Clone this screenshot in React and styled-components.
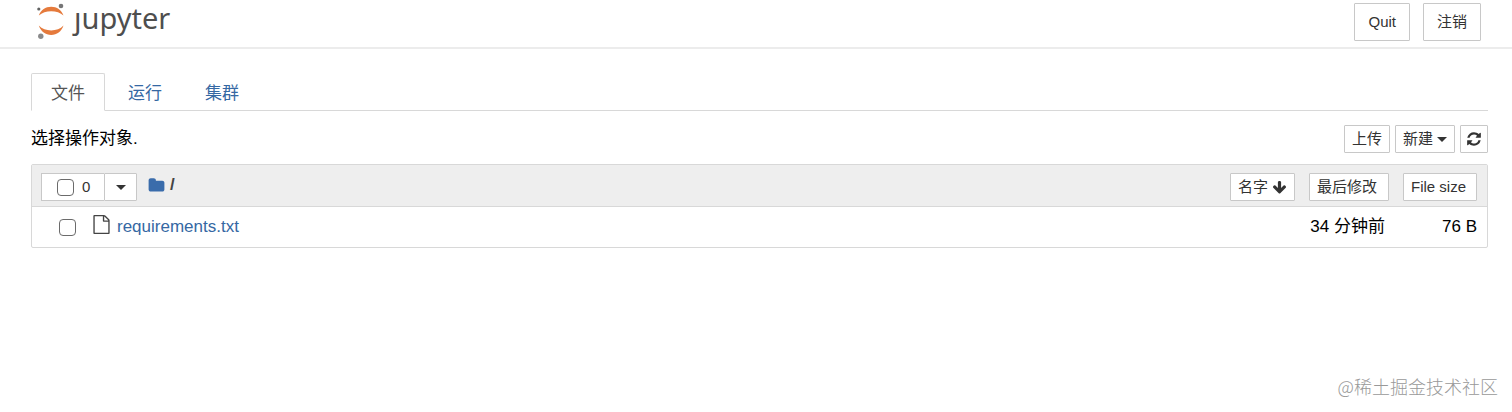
import React from "react";
import styled, { createGlobalStyle } from "styled-components";

const GlobalStyle = createGlobalStyle`
  *, *::before, *::after { box-sizing: border-box; }
  body {
    margin: 0;
    background: #fff;
    color: #000;
    font-family: "Liberation Sans", "Noto Sans CJK SC", sans-serif;
    font-size: 17px;
    line-height: 24px;
  }
`;

const Page = styled.div`
  display: flex;
  flex-direction: column;
  min-height: 100vh;
`;

const Header = styled.header`
  display: flex;
  justify-content: space-between;
  align-items: flex-start;
  padding: 3px 31px 6px 37px;
  border-bottom: 2px solid #ececec;
`;

const Logo = styled.a`
  display: flex;
  align-items: flex-start;
  gap: 9px;
  color: #4e4e4e;
  text-decoration: none;
`;

const LogoMark = styled.svg`
  display: block;
  width: 28px;
  height: 36px;
`;

const LogoText = styled.span`
  font-family: "Noto Sans", sans-serif;
  font-size: 29px;
  line-height: 30px;
`;

const HeaderActions = styled.div`
  display: flex;
  gap: 13px;
`;

const Button = styled.button`
  display: inline-flex;
  align-items: center;
  justify-content: ${(p) => p.$align || "center"};
  gap: 4px;
  height: ${(p) => (p.$large ? 38 : 28)}px;
  width: ${(p) => (p.$width ? `${p.$width}px` : "auto")};
  padding: 0 ${(p) => (p.$large ? 13 : 7)}px;
  border: 1px solid #c8c8c8;
  border-radius: 1px;
  background: #fff;
  color: #333;
  font-family: inherit;
  font-size: 15px;
  line-height: 20px;
  white-space: nowrap;
  cursor: pointer;
`;

const Main = styled.main`
  flex: 1;
  padding: 24px 24px 0 31px;
`;

const Tabs = styled.nav`
  display: flex;
  gap: 3px;
  border-bottom: 1px solid #d8d8d8;
`;

const Tab = styled.a`
  height: 38px;
  margin-bottom: -1px;
  padding: 8px 19px 0;
  border: 1px solid ${(p) => (p.$active ? "#d8d8d8" : "transparent")};
  border-bottom-color: ${(p) => (p.$active ? "#fff" : "transparent")};
  border-radius: 2px 2px 0 0;
  color: ${(p) => (p.$active ? "#555" : "#3568a3")};
  text-decoration: none;
`;

const Toolbar = styled.div`
  display: flex;
  justify-content: space-between;
  align-items: center;
  padding: 14px 0 11px;
`;

const Notice = styled.p`
  margin: 0;
`;

const ToolbarActions = styled.div`
  display: flex;
  gap: 5px;
`;

const FileList = styled.section`
  border: 1px solid #d8d8d8;
  border-radius: 2px;
`;

const ListHeader = styled.div`
  display: flex;
  justify-content: space-between;
  align-items: flex-start;
  padding: 8px 10px 5px 9px;
  border-bottom: 1px solid #d8d8d8;
  background: #eee;
`;

const Selection = styled.div`
  display: flex;
  align-items: flex-start;
`;

const SelectAll = styled.label`
  display: flex;
  align-items: center;
  gap: 8px;
  width: 63px;
  height: 28px;
  padding-left: 15px;
  border: 1px solid #c8c8c8;
  border-right: 0;
  background: #fff;
  color: #333;
  font-size: 15px;
`;

const Checkbox = styled.input`
  appearance: none;
  flex: none;
  width: 17px;
  height: 17px;
  margin: 0;
  border: 1px solid #6b6b6b;
  border-radius: 4px;
  background: #fff;
  &:checked { background: #3568a3; }
`;

const Breadcrumb = styled.nav`
  display: flex;
  align-items: center;
  gap: 5px;
  height: 24px;
  margin-left: 11px;
  color: #444;
  font-weight: 700;
`;

const CrumbLink = styled.a`
  display: flex;
  color: #3a6cab;
`;

const SortActions = styled.div`
  display: flex;
  gap: 14px;
`;

const FileRow = styled.div`
  display: flex;
  align-items: center;
  height: 40px;
  padding: 0 10px 0 27px;
`;

const FileLink = styled.a`
  display: flex;
  align-items: flex-start;
  gap: 6px;
  margin-left: 16px;
  color: #3568a3;
  text-decoration: none;
`;

const Modified = styled.span`
  margin-left: auto;
`;

const Size = styled.span`
  width: 92px;
  text-align: right;
`;

const Caret = styled.span`
  border-top: 5px solid #333;
  border-left: 5px solid transparent;
  border-right: 5px solid transparent;
`;

const Glyph = styled.svg`
  display: block;
  flex: none;
  width: ${(p) => p.$size}px;
  height: ${(p) => p.$size}px;
  fill: ${(p) => p.$color || "currentColor"};
`;

const Footer = styled.footer`
  padding: 0 14px 14px;
  color: #999;
  font-family: "Noto Sans CJK SC", sans-serif;
  font-size: 18px;
  text-align: right;
  font-weight: 300;
`;

const paths = {
  refresh:
    "M1639 1056q0 5-1 7-64 268-268 434.500t-478 166.500q-146 0-282.500-55t-243.500-157l-129 129q-19 19-45 19t-45-19-19-45v-448q0-26 19-45t45-19h448q26 0 45 19t19 45-19 45l-137 137q71 66 161 102t187 36q134 0 250-65t186-179q11-17 53-117 8-23 30-23h192q13 0 22.500 9.500t9.500 22.500zm25-800v448q0 26-19 45t-45 19h-448q-26 0-45-19t-19-45 19-45l138-138q-148-137-349-137-134 0-250 65t-186 179q-11 17-53 117-8 23-30 23h-199q-13 0-22.500-9.500t-9.500-22.500v-7q65-268 270-434.500t480-166.500q146 0 284 55.500t245 156.500l130-129q19-19 45-19t45 19 19 45z",
  file:
    "M1596 380q28 28 48 76t20 88v1152q0 40-28 68t-68 28h-1344q-40 0-68-28t-28-68v-1600q0-40 28-68t68-28h896q40 0 88 20t76 48zm-444-244v376h376q-10-29-22-41l-313-313q-12-12-41-22zm384 1528v-1024h-416q-40 0-68-28t-28-68v-416h-768v1536h1280z",
  folder:
    "M1728 608v704q0 92-66 158t-158 66h-1216q-92 0-158-66t-66-158v-960q0-92 66-158t158-66h320q92 0 158 66t66 158v32h672q92 0 158 66t66 158z",
  arrowDown:
    "M1675 832q0 53-37 90l-651 652q-39 37-91 37-53 0-90-37l-651-652q-38-36-38-90 0-53 38-91l74-75q39-37 91-37 53 0 90 37l294 294v-704q0-52 38-90t90-38h128q52 0 90 38t38 90v704l294-294q37-37 90-37 52 0 91 37l75 75q37 39 37 91z",
};

function Icon({ name, size, color }) {
  return (
    <Glyph viewBox="0 0 1792 1792" $size={size} $color={color} aria-hidden="true">
      <path d={paths[name]} />
    </Glyph>
  );
}

const tabs = ["文件", "运行", "集群"];
const files = [{ name: "requirements.txt", modified: "34 分钟前", size: "76 B" }];

export default function App() {
  return (
    <>
      <GlobalStyle />
      <Page>
        <Header>
          <Logo href="#" aria-label="jupyter">
            <LogoMark viewBox="0 0 28 36" aria-hidden="true">
              <path d="M1.800 12.500C4 7 8.500 3.800 14.200 3.800s10.200 3.200 12.300 8.700C23.500 9.600 19 8.200 14.200 8.200S5 9.600 1.800 12.500z" fill="#e57a3c" />
              <path d="M1.800 22.500C4 28.500 8.500 32 14.200 32S24.400 28.500 26.500 22.500C23.500 25.800 19 27.400 14.200 27.400S5 25.800 1.800 22.500z" fill="#e57a3c" />
              <circle cx="24" cy="3" r="2.300" fill="#767677" />
              <circle cx="1.800" cy="6" r="1.600" fill="#616262" />
              <circle cx="3.800" cy="33.300" r="2.700" fill="#8a8a8b" />
            </LogoMark>
            <LogoText>ȷupyter</LogoText>
          </Logo>
          <HeaderActions>
            <Button $large>Quit</Button>
            <Button $large>注销</Button>
          </HeaderActions>
        </Header>
        <Main>
          <Tabs>
            {tabs.map((label, i) => (
              <Tab key={label} href="#" $active={i === 0}>{label}</Tab>
            ))}
          </Tabs>
          <Toolbar>
            <Notice>选择操作对象.</Notice>
            <ToolbarActions>
              <Button>上传</Button>
              <Button>新建<Caret /></Button>
              <Button $width={28} aria-label="刷新"><Icon name="refresh" size={16} /></Button>
            </ToolbarActions>
          </Toolbar>
          <FileList>
            <ListHeader>
              <Selection>
                <SelectAll><Checkbox type="checkbox" />0</SelectAll>
                <Button $width={33} aria-label="选择"><Caret /></Button>
                <Breadcrumb>
                  <CrumbLink href="#" aria-label="根目录"><Icon name="folder" size={17} /></CrumbLink>
                  <span>/</span>
                </Breadcrumb>
              </Selection>
              <SortActions>
                <Button>名字<Icon name="arrowDown" size={15} /></Button>
                <Button $width={80} $align="flex-start">最后修改</Button>
                <Button $width={74} $align="flex-start">File size</Button>
              </SortActions>
            </ListHeader>
            {files.map((file) => (
              <FileRow key={file.name}>
                <Checkbox type="checkbox" aria-label={file.name} />
                <FileLink href="#">
                  <Icon name="file" size={19} color="#444" />
                  {file.name}
                </FileLink>
                <Modified>{file.modified}</Modified>
                <Size>{file.size}</Size>
              </FileRow>
            ))}
          </FileList>
        </Main>
        <Footer>@稀土掘金技术社区</Footer>
      </Page>
    </>
  );
}
